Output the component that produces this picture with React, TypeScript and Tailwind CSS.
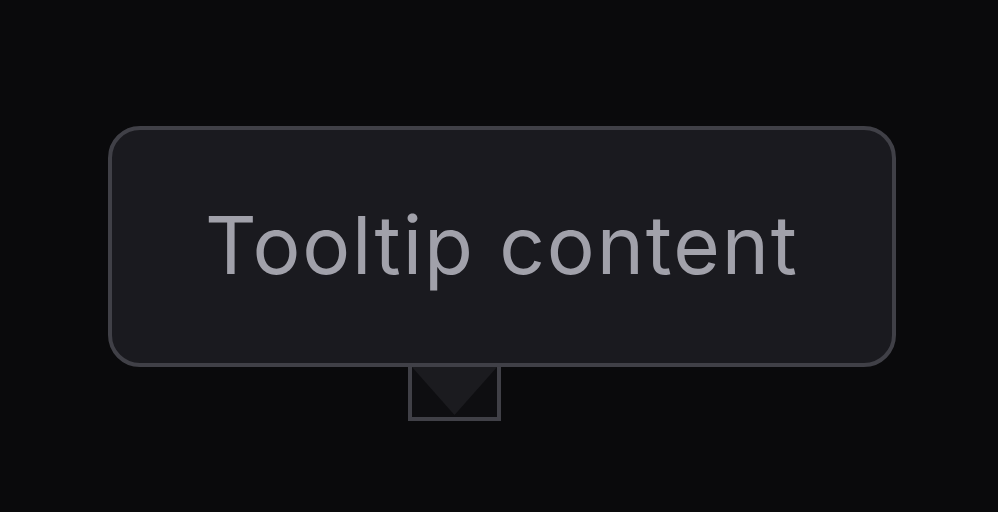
export default function App() {
  return (
    <div className="w-[998px] h-[512px] bg-[#0a0a0c] pt-[126px] pl-[108px] flex flex-col items-start">
      <div className="w-[788px] h-[241px] rounded-[32px] border-4 border-[#404047] bg-[#1a1a1f] flex items-center justify-center">
        <span
          className="text-[80px] leading-none text-[#a1a1aa] tracking-[1.9px] -mt-[3px]"
          style={{ fontFamily: "Inter, 'Noto Sans', sans-serif" }}
        >
          Tooltip content
        </span>
      </div>
      <div className="ml-[300px] w-[93px] h-[54px] border-x-4 border-b-4 border-[#404047] bg-[#0e0e11]">
        <svg width="85" height="50" viewBox="0 0 85 50" className="block">
          <polygon points="0,0 85,0 42.5,48" fill="#1b1b1f" />
        </svg>
      </div>
    </div>
  );
}
